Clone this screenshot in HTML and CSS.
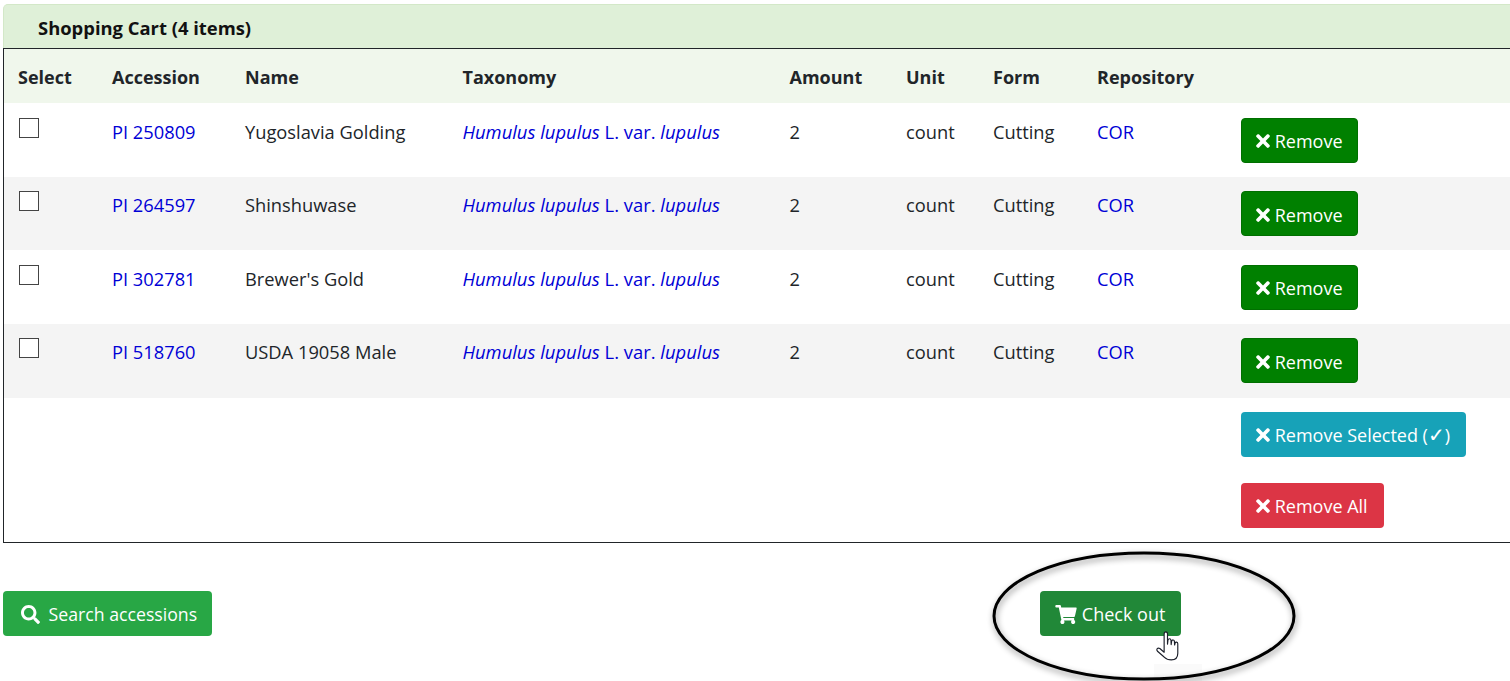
FILE: index.html
```html
<!DOCTYPE html>
<html lang="en">
<head>
<meta charset="utf-8">
<title>Shopping Cart</title>
<link rel="stylesheet" href="styles.css">
</head>
<body>
<svg class="defs" width="0" height="0" aria-hidden="true">
  <symbol id="i-x" viewBox="0 0 352 512"><path d="M242.72 256l100.07-100.07c12.28-12.28 12.28-32.19 0-44.48l-22.24-22.24c-12.28-12.28-32.19-12.28-44.48 0L176 189.28 75.93 89.21c-12.28-12.28-32.19-12.28-44.48 0L9.21 111.45c-12.28 12.28-12.28 32.19 0 44.48L109.28 256 9.21 356.07c-12.28 12.28-12.28 32.19 0 44.48l22.24 22.24c12.28 12.28 32.2 12.28 44.48 0L176 322.72l100.07 100.07c12.28 12.28 32.2 12.28 44.48 0l22.24-22.24c12.28-12.28 12.28-32.19 0-44.48L242.72 256z"/></symbol>
</svg>
<main class="page">
  <h1 class="panel-title">Shopping Cart (4 items)</h1>
  <table class="cart">
    <colgroup>
      <col class="c-select"><col class="c-acc"><col class="c-name"><col class="c-tax"><col class="c-amt"><col class="c-unit"><col class="c-form"><col class="c-repo"><col class="c-act">
    </colgroup>
    <thead>
      <tr><th>Select</th><th>Accession</th><th>Name</th><th>Taxonomy</th><th>Amount</th><th>Unit</th><th>Form</th><th>Repository</th><th></th></tr>
    </thead>
    <tbody>
      <tr>
        <td><span class="check"></span></td><td><a href="#">PI 250809</a></td><td>Yugoslavia Golding</td>
        <td><a href="#" class="tax"><i>Humulus lupulus</i> L. var. <i>lupulus</i></a></td><td>2</td><td>count</td><td>Cutting</td><td><a href="#">COR</a></td>
        <td><button class="btn btn-green"><svg class="ico"><use href="#i-x"/></svg> Remove</button></td>
      </tr>
      <tr class="alt">
        <td><span class="check"></span></td><td><a href="#">PI 264597</a></td><td>Shinshuwase</td>
        <td><a href="#" class="tax"><i>Humulus lupulus</i> L. var. <i>lupulus</i></a></td><td>2</td><td>count</td><td>Cutting</td><td><a href="#">COR</a></td>
        <td><button class="btn btn-green"><svg class="ico"><use href="#i-x"/></svg> Remove</button></td>
      </tr>
      <tr>
        <td><span class="check"></span></td><td><a href="#">PI 302781</a></td><td>Brewer's Gold</td>
        <td><a href="#" class="tax"><i>Humulus lupulus</i> L. var. <i>lupulus</i></a></td><td>2</td><td>count</td><td>Cutting</td><td><a href="#">COR</a></td>
        <td><button class="btn btn-green"><svg class="ico"><use href="#i-x"/></svg> Remove</button></td>
      </tr>
      <tr class="alt end">
        <td><span class="check"></span></td><td><a href="#">PI 518760</a></td><td>USDA 19058 Male</td>
        <td><a href="#" class="tax"><i>Humulus lupulus</i> L. var. <i>lupulus</i></a></td><td>2</td><td>count</td><td>Cutting</td><td><a href="#">COR</a></td>
        <td><button class="btn btn-green"><svg class="ico"><use href="#i-x"/></svg> Remove</button></td>
      </tr>
      <tr class="bulk">
        <td colspan="8"></td>
        <td><button class="btn btn-teal"><svg class="ico"><use href="#i-x"/></svg><span> Remove Selected (<span class="tick">✓</span>)</span></button></td>
      </tr>
      <tr class="bulk last">
        <td colspan="8"></td>
        <td><button class="btn btn-red"><svg class="ico"><use href="#i-x"/></svg> Remove All</button></td>
      </tr>
    </tbody>
  </table>
  <div class="actions">
    <button class="btn btn-search"><svg class="ico-lg" viewBox="0 0 512 512"><path d="M505 442.7L405.3 343c-4.5-4.5-10.6-7-17-7H372c27.6-35.3 44-79.7 44-128C416 93.1 322.9 0 208 0S0 93.1 0 208s93.1 208 208 208c48.3 0 92.7-16.4 128-44v16.3c0 6.4 2.5 12.5 7 17l99.7 99.7c9.4 9.4 24.6 9.4 33.9 0l28.3-28.3c9.4-9.4 9.4-24.6.1-34zM208 336c-70.7 0-128-57.2-128-128 0-70.7 57.2-128 128-128 70.7 0 128 57.2 128 128 0 70.7-57.2 128-128 128z"/></svg> Search accessions</button>
    <button class="btn btn-checkout"><svg class="ico-cart" viewBox="0 0 576 512"><path d="M528.12 301.319l47.273-208C578.806 78.301 567.391 64 551.99 64H159.208l-9.166-44.81C147.758 8.021 137.93 0 126.529 0H24C10.745 0 0 10.745 0 24v16c0 13.255 10.745 24 24 24h69.883l70.248 343.435C147.325 417.1 136 435.222 136 456c0 30.928 25.072 56 56 56s56-25.072 56-56c0-15.674-6.447-29.835-16.824-40h209.647C430.447 426.165 424 440.326 424 456c0 30.928 25.072 56 56 56s56-25.072 56-56c0-22.172-12.888-41.332-31.579-50.405l5.517-24.276c3.413-15.018-8.002-29.319-23.403-29.319H218.117l-6.545-32h293.145c11.206 0 20.92-7.754 23.403-18.681z"/></svg> Check out</button>
  </div>
</main>
<div class="patch"></div>
<svg class="ellipse" viewBox="0 0 320 150" aria-hidden="true">
  <ellipse cx="156" cy="67" rx="150" ry="63"/>
</svg>
<svg class="hand" viewBox="0 0 26 32" aria-hidden="true">
  <path d="M9.5 22.5 V3.5 C9.5 0.6 13 0.6 13 3.5 V14 L13.5 9.8 C14 7.9 16.4 8 16.6 10 L16.8 14.5 L17.3 11 C17.8 9.2 20 9.3 20.2 11.2 L20.4 15 L20.9 13 C21.4 11.4 23.7 11.6 23.7 13.6 V23.5 C23.7 27.5 21.5 30.5 17 30.5 C13 30.5 11.5 29.5 9.5 27.5 L2.6 21.5 C0.8 19.6 2.8 17.2 5 18.6 Z"/>
</svg>
</body>
</html>
```
FILE: styles.css
```css
html, body { margin: 0; padding: 0; }
body {
  height: 681px;
  width: 1510px;
  overflow: hidden;
  position: relative;
  background: #fff;
  color: #212529;
  font-family: "Open Sans", "Noto Sans", "Liberation Sans", sans-serif;
  font-size: 18.3px;
}
.defs { position: absolute; }
.page { padding: 4px 0 0 3px; width: 1530px; box-sizing: border-box; }
.panel-title {
  margin: 0;
  height: 44px;
  box-sizing: border-box;
  padding: 11px 0 0 34px;
  background: #dff0d8;
  border: 1px solid #d3e8c8;
  border-bottom: 0;
  border-radius: 5px 5px 0 0;
  font-size: 18.4px;
  line-height: 24px;
  font-weight: 700;
  color: #111;
}
.cart {
  border-collapse: separate;
  border-spacing: 0;
  table-layout: fixed;
  width: 1527px;
  border: 1px solid #212529;
}
.c-select { width: 93px; }
.c-acc { width: 133px; }
.c-name { width: 217.5px; }
.c-tax { width: 327px; }
.c-amt { width: 116.5px; }
.c-unit { width: 87px; }
.c-form { width: 104px; }
.c-repo { width: 144px; }
th {
  background: #f0f7ec;
  height: 54px;
  padding: 1px 0 0 15px;
  text-align: left;
  font-weight: 700;
  font-size: 18px;
  box-sizing: border-box;
}
th:first-child { padding-left: 14px; }
td {
  padding: 14.5px 0 14px 15px;
  vertical-align: top;
  line-height: 28px;
}
.alt td { background: #f4f4f4; }
.end td { padding-bottom: 15px; }
.bulk td { padding: 14px 0 12px 15px; }
.bulk.last td { padding-bottom: 14px; }
a { color: #0000d6; text-decoration: none; }
.tax { font-size: 18.4px; }
.tick { font-family: "DejaVu Sans", sans-serif; font-size: 20px; line-height: 1; }
.check {
  display: block;
  width: 18px;
  height: 18px;
  border: 1px solid #444;
  background: #fff;
}
.btn {
  display: inline-flex;
  align-items: center;
  height: 45px;
  padding: 2px 15px 0 14px;
  border: 1px solid transparent;
  border-radius: 4px;
  color: #fff;
  font: inherit;
  font-size: 18px;
  white-space: pre;
  vertical-align: top;
}
.btn-green { background: #008000; border-color: #006f00; }
.btn-teal { background: #17a2b8; padding-top: 0; }
.btn-red { background: #dc3545; padding-top: 0; }
.btn-search { background: #28a745; padding: 2px 14px 0 17px; font-size: 17.7px; }
.btn-checkout { background: #218838; margin-left: 828px; }
.ico { width: 14px; height: 20px; fill: #fff; }
.ico-lg { width: 19px; height: 19px; fill: #fff; margin-right: 4px; }
.ico-cart { width: 22px; height: 19px; fill: #fff; }
.ico, .ico-lg, .ico-cart { flex: none; }
.actions { display: flex; margin-top: 47.5px; }
.ellipse {
  position: absolute;
  left: 988px;
  top: 549px;
  width: 320px;
  height: 150px;
  overflow: visible;
  filter: drop-shadow(1px 3px 3px rgba(0, 0, 0, 0.45));
}
.ellipse ellipse { fill: none; stroke: #000; stroke-width: 3; }
.hand {
  position: absolute;
  left: 1155px;
  top: 630px;
  width: 25px;
  height: 32px;
}
.hand path { fill: #fff; stroke: #1b1f2a; stroke-width: 1.2; stroke-linejoin: round; }
.patch { position: absolute; left: 1154px; top: 664px; width: 48px; height: 17px; background: #fafafa; }
```
